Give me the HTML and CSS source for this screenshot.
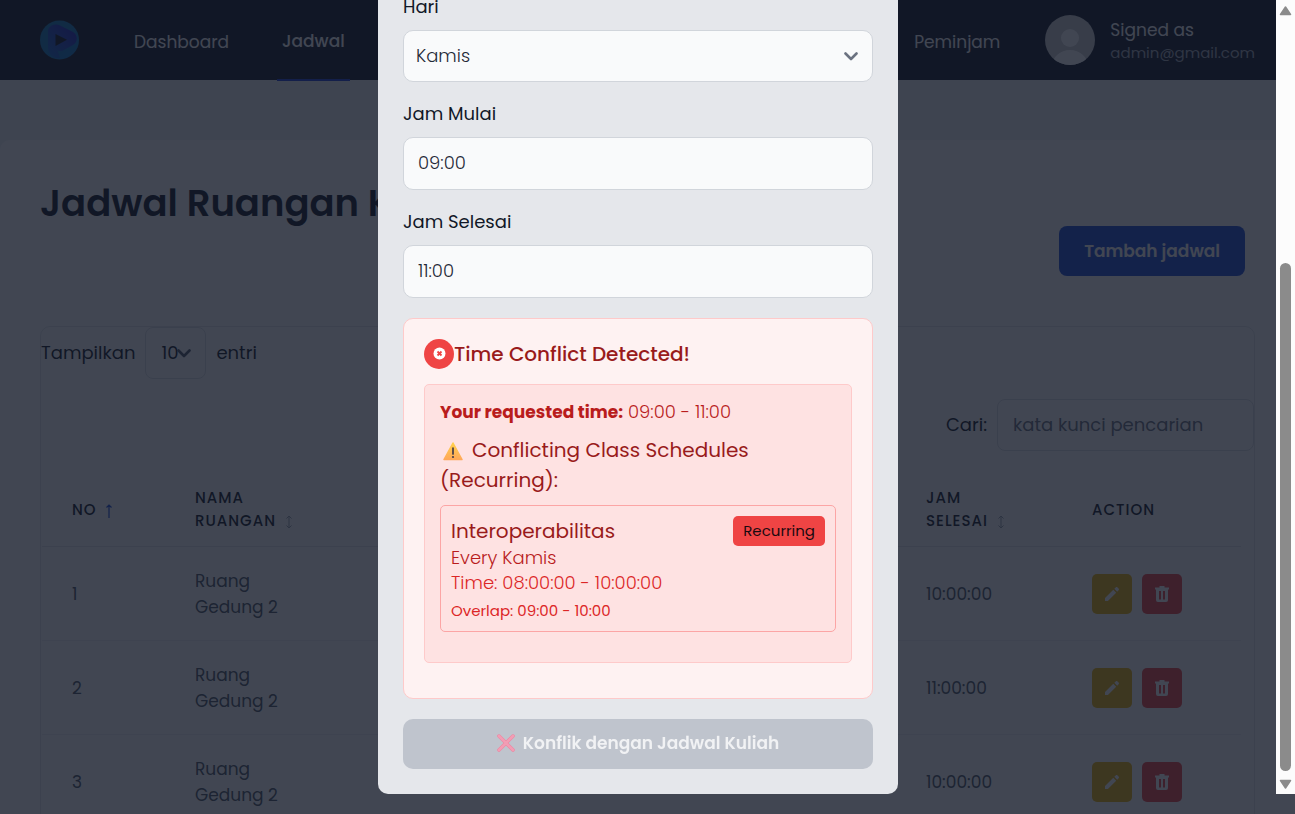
FILE: index.html
```html
<!DOCTYPE html>
<html lang="id">
<head>
<meta charset="utf-8">
<meta name="viewport" content="width=device-width, initial-scale=1">
<title>Jadwal Ruangan</title>
<link rel="stylesheet" href="styles.css">
</head>
<body>
<svg class="sprite" aria-hidden="true">
  <symbol id="i-chevron" viewBox="0 0 14 9"><path d="M1.500 1.500 7 7l5.500-5.500" fill="none" stroke="currentColor" stroke-width="2.600" stroke-linecap="round" stroke-linejoin="round"/></symbol>
  <symbol id="i-pencil" viewBox="0 0 16 16"><path d="M1 12.100 9.300 3.800l2.900 2.900L3.900 15H1zM10.300 2.800l1.400-1.400c.5-.5 1.300-.5 1.800 0l1.100 1.100c.5.500.5 1.300 0 1.800l-1.400 1.400z" fill="currentColor"/></symbol>
  <symbol id="i-trash" viewBox="0 0 14 16"><path fill-rule="evenodd" d="M4.500 0h5v1.500H14v2h-1V14a2 2 0 0 1-2 2H3a2 2 0 0 1-2-2V3.500H0v-2h4.500zM4 5v8.500h2V5zm4 0v8.500h2V5z" fill="currentColor"/></symbol>
  <symbol id="i-sort" viewBox="0 0 8 14"><path d="M4 1v12M1.500 3.500 4 1l2.500 2.500M1.500 10.500 4 13l2.500-2.500" fill="none" stroke="currentColor"/></symbol>
  <symbol id="i-up" viewBox="0 0 8 14"><path d="M4 1v13M1.500 3.500 4 1l2.500 2.500" fill="none" stroke="currentColor" stroke-width="1.200"/></symbol>
</svg>

<div class="page">
  <header class="navbar">
    <a class="brand" href="#" aria-label="Beranda">
      <svg width="40" height="40" viewBox="0 0 40 40">
        <defs>
          <linearGradient id="g1" x1="0" y1="0" x2="1" y2="1"><stop offset="0" stop-color="#127ab4"/><stop offset="1" stop-color="#0c74c4"/></linearGradient>
          <linearGradient id="g2" x1="0" y1="1" x2="1" y2="0"><stop offset="0" stop-color="#1468c8"/><stop offset=".55" stop-color="#2040c0"/><stop offset="1" stop-color="#2418c0"/></linearGradient>
        </defs>
        <circle cx="19.500" cy="20" r="19.500" fill="url(#g1)"/>
        <path d="M20 38c-7 1-12-4-12-11V12c0-6 6-9 12-6.500l13 6.500c5 3 5 10 0 13l-9 5c-5 3-8 0-8-4" fill="url(#g2)"/>
        <path d="M15.500 14 27 19.800 15.500 26z" fill="#111827"/>
      </svg>
    </a>
    <nav class="menu">
      <a class="menu-link" href="#">Dashboard</a>
      <a class="menu-link menu-link-active" href="#">Jadwal</a>
      <a class="menu-link menu-link-last" href="#">Peminjam</a>
    </nav>
    <div class="account">
      <svg width="50" height="50" viewBox="0 0 50 50" aria-hidden="true">
        <defs><clipPath id="av"><circle cx="25" cy="25" r="25"/></clipPath></defs>
        <g clip-path="url(#av)"><rect width="50" height="50" fill="#cfcfd0"/><circle cx="25" cy="23" r="9" fill="#fff"/><ellipse cx="25" cy="51" rx="18" ry="16" fill="#fff"/></g>
      </svg>
      <div class="account-text">
        <span class="account-role">Signed as</span>
        <span class="account-mail">admin@gmail.com</span>
      </div>
    </div>
  </header>

  <main class="content">
    <h1 class="title">Jadwal Ruangan Kuliah</h1>
    <div class="actions"><button class="btn-add" type="button">Tambah jadwal</button></div>

    <section class="card">
      <div class="length">
        <label for="len">Tampilkan</label>
        <span class="select-wrap length-select">
          <select id="len" class="len-control"><option>10</option></select>
          <svg class="chevron" width="14" height="9"><use href="#i-chevron"/></svg>
        </span>
        <span>entri</span>
      </div>
      <div class="search">
        <label for="cari">Cari:</label>
        <input id="cari" class="search-control" type="text" placeholder="kata kunci pencarian">
      </div>
      <table class="schedule">
        <colgroup><col class="c-no"><col class="c-room"><col><col class="c-end"><col class="c-action"></colgroup>
        <thead>
          <tr>
            <th>No <svg class="sort sort-active" width="8" height="14"><use href="#i-up"/></svg></th>
            <th>Nama<br>Ruangan <svg class="sort" width="8" height="14"><use href="#i-sort"/></svg></th>
            <td></td>
            <th>Jam<br>Selesai <svg class="sort" width="8" height="14"><use href="#i-sort"/></svg></th>
            <th>Action</th>
          </tr>
        </thead>
        <tbody>
          <tr><td>1</td><td>Ruang<br>Gedung 2</td><td></td><td>10:00:00</td>
            <td><div class="row-actions"><button class="icon-btn edit" type="button" aria-label="Edit"><svg width="16" height="16"><use href="#i-pencil"/></svg></button><button class="icon-btn delete" type="button" aria-label="Hapus"><svg width="14" height="16"><use href="#i-trash"/></svg></button></div></td></tr>
          <tr><td>2</td><td>Ruang<br>Gedung 2</td><td></td><td>11:00:00</td>
            <td><div class="row-actions"><button class="icon-btn edit" type="button" aria-label="Edit"><svg width="16" height="16"><use href="#i-pencil"/></svg></button><button class="icon-btn delete" type="button" aria-label="Hapus"><svg width="14" height="16"><use href="#i-trash"/></svg></button></div></td></tr>
          <tr><td>3</td><td>Ruang<br>Gedung 2</td><td></td><td>10:00:00</td>
            <td><div class="row-actions"><button class="icon-btn edit" type="button" aria-label="Edit"><svg width="16" height="16"><use href="#i-pencil"/></svg></button><button class="icon-btn delete" type="button" aria-label="Hapus"><svg width="14" height="16"><use href="#i-trash"/></svg></button></div></td></tr>
        </tbody>
      </table>
    </section>
  </main>
</div>

<div class="overlay">
  <div class="overlay-body">
    <form class="modal" role="dialog" aria-label="Tambah jadwal">
      <div class="field">
        <label for="hari">Hari</label>
        <span class="select-wrap">
          <select id="hari" class="control control-select"><option>Kamis</option></select>
          <svg class="chevron" width="14" height="9"><use href="#i-chevron"/></svg>
        </span>
      </div>
      <div class="field">
        <label for="mulai">Jam Mulai</label>
        <input id="mulai" class="control control-time" type="text" value="09:00">
      </div>
      <div class="field">
        <label for="selesai">Jam Selesai</label>
        <input id="selesai" class="control control-time" type="text" value="11:00">
      </div>

      <section class="alert">
        <div class="alert-head">
          <svg width="30" height="30" viewBox="0 0 30 30" aria-hidden="true"><circle cx="15" cy="15" r="15" fill="#ef4444"/><circle cx="15.500" cy="14.500" r="6" fill="#fff"/><path d="m13.500 12.500 4 4m0-4-4 4" stroke="#ef4444" stroke-width="1.800"/></svg>
          <h2 class="alert-title">Time Conflict Detected!</h2>
        </div>
        <div class="alert-body">
          <p class="requested"><strong>Your requested time:</strong> 09:00 - 11:00</p>
          <h3 class="conflict-title"><svg class="warn" width="22" height="20" viewBox="0 0 22 20" aria-hidden="true"><defs><linearGradient id="w" x1="0" y1="0" x2="0" y2="1"><stop offset="0" stop-color="#ffd04f"/><stop offset="1" stop-color="#ffa858"/></linearGradient></defs><path d="M11 2 20 18.500H2z" fill="url(#w)" stroke="url(#w)" stroke-width="1.500" stroke-linejoin="round"/><path d="M11 7v6" stroke="#433b4a" stroke-width="1.700" stroke-linecap="round"/><circle cx="11" cy="16" r="1.100" fill="#433b4a"/></svg>Conflicting Class Schedules (Recurring):</h3>
          <article class="conflict">
            <div>
              <h4 class="conflict-name">Interoperabilitas</h4>
              <p class="conflict-day">Every Kamis</p>
              <p class="conflict-time">Time: 08:00:00 - 10:00:00</p>
              <p class="conflict-overlap">Overlap: 09:00 - 10:00</p>
            </div>
            <span class="badge">Recurring</span>
          </article>
        </div>
      </section>

      <button class="submit" type="submit" disabled>
        <svg width="18" height="18" viewBox="0 0 18 18" aria-hidden="true"><path d="m2 2 14 14m0-14-14 14" stroke="#ee829f" stroke-width="3.500" stroke-linecap="round"/><path d="m2 2 14 14m0-14-14 14" stroke="#f29db4" stroke-width="2.500" stroke-linecap="round"/></svg>
        Konflik dengan Jadwal Kuliah
      </button>
    </form>
  </div>
  <div class="scrollbar" aria-hidden="true">
    <svg width="13" height="10" viewBox="0 0 13 10"><path d="M6.500 1 11.500 8.500h-10z" fill="#8b8b8b" stroke="#8b8b8b" stroke-width="1.500" stroke-linejoin="round"/></svg>
    <div class="track"><div class="thumb"></div></div>
    <svg width="13" height="10" viewBox="0 0 13 10"><path d="M6.500 9 11.500 1.500h-10z" fill="#8b8b8b" stroke="#8b8b8b" stroke-width="1.500" stroke-linejoin="round"/></svg>
  </div>
</div>
</body>
</html>
```
FILE: styles.css
```css
*, *::before, *::after { box-sizing: border-box; }

body {
  margin: 0;
  height: 100vh;
  overflow: hidden;
  background: #f1f4f6;
  color: #111827;
  font: 400 18px/24px Poppins, Inter, sans-serif;
}

h1, h2, h3, h4, p { margin: 0; font-weight: 400; }
a { color: inherit; text-decoration: none; }
svg { display: block; flex: none; }
button, input, select { font: inherit; color: inherit; margin: 0; }
button { border: 0; padding: 0; }
.sprite { position: absolute; width: 0; height: 0; }

/* Navbar */
.navbar {
  display: flex;
  align-items: center;
  height: 80px;
  padding: 0 40px;
  background: #111827;
  color: #fff;
}
.menu { display: flex; flex: 1; align-self: stretch; gap: 43px; margin-left: 49px; font-size: 17px; }
.menu-link { display: flex; align-items: center; height: 81px; padding: 2px 5px 0; }
.menu-link-active { font-weight: 500; border-bottom: 2px solid #1d3fd8; }
.menu-link-last { margin-left: auto; margin-right: 40px; }
.account { display: flex; align-items: center; gap: 15px; }
.account-text { display: flex; flex-direction: column; padding-top: 2px; }
.account-role { font-size: 17px; line-height: 24px; }
.account-mail { font-size: 15px; line-height: 22px; color: #a3a9b6; }

/* Page content */
.content {
  min-height: 100vh;
  margin-top: 60px;
  padding: 40px;
  border-radius: 10px 10px 0 0;
  background: #fff;
}
.title { font-size: 37px; line-height: 46px; font-weight: 600; }
.actions { display: flex; justify-content: flex-end; padding: 0 10px 50px; }
.btn-add {
  height: 50px;
  padding: 0 25px;
  border-radius: 8px;
  background: #1d4ed8;
  color: #fff;
  font-size: 17px;
  font-weight: 600;
}

.card { border: 1px solid #e5e7eb; border-radius: 10px; }
.length { display: flex; align-items: center; gap: 10px; }
.select-wrap { display: grid; align-items: center; }
.select-wrap > * { grid-area: 1 / 1; }
.chevron { justify-self: end; margin-right: 15px; color: #6b7280; pointer-events: none; }
.length-select .chevron { color: #4b5563; }
.len-control {
  appearance: none;
  width: 61px;
  height: 52px;
  padding: 0 15px;
  border: 1px solid #dde0e5;
  border-radius: 8px;
  background: #fff;
}
.search { display: flex; align-items: center; justify-content: flex-end; gap: 10px; margin: 20px 0; }
.search-control {
  width: 257px;
  height: 52px;
  padding: 0 15px 2px;
  border: 1px solid #dde0e5;
  border-radius: 8px;
  background: #fff;
}
.search-control::placeholder { color: #6b7280; opacity: 1; }

.schedule { width: calc(100% - 14px); margin-left: 1px; table-layout: fixed; border-collapse: collapse; line-height: 26px; }
.schedule th, .schedule td { padding: 20px 30px; text-align: left; border-bottom: 1px solid #f0f1f3; white-space: nowrap; }
.schedule tbody td { height: 94px; color: #4b5563; font-size: 17px; }
.schedule thead { background: #fcfcfd; }
.schedule thead th, .schedule thead td { padding: 15px 30px 14px; font-size: 15px; line-height: 23px; font-weight: 500; letter-spacing: 1px; text-transform: uppercase; border-color: #e5e7eb; }
.c-no { width: 123px; }
.c-room { width: 190px; }
.c-end { width: 166px; }
.c-action { width: 179px; }
.sort { display: inline-block; vertical-align: -3px; margin-left: 4px; color: #9ca3af; }
.sort-active { color: #1d4ed8; }
.row-actions { display: flex; gap: 10px; }
.icon-btn { display: flex; align-items: center; justify-content: center; width: 40px; height: 40px; border-radius: 5px; color: #fff; }
.edit { background: #eab308; }
.delete { background: #ef4444; }

/* Modal overlay */
.overlay { position: fixed; inset: 0; display: flex; overflow: hidden; background: rgba(17, 24, 39, .8); }
.overlay-body { flex: 1; display: flex; justify-content: center; align-items: flex-end; padding-bottom: 20px; }
.modal {
  display: flex;
  flex-direction: column;
  gap: 20px;
  width: 100%;
  max-width: 520px;
  padding: 25px;
  border-radius: 10px;
  background: #e5e7eb;
}
.field { display: flex; flex-direction: column; gap: 11px; }
.control {
  width: 100%;
  height: 53px;
  padding: 0 14px 2px;
  border: 1px solid #d1d5db;
  border-radius: 10px;
  background: #f9fafb;
  color: #1f2937;
  font-weight: 300;
}
.control-select { appearance: none; height: 52px; padding: 0 12px; }

.alert { padding: 20px 20px 35px; border: 1px solid #fecaca; border-radius: 10px; background: #fef2f2; }
.alert-head { display: flex; align-items: center; margin-bottom: 15px; }
.alert-title { font-size: 20px; line-height: 30px; font-weight: 500; color: #991b1b; }
.alert-body { padding: 15px 15px 30px; border: 1px solid #fecaca; border-radius: 5px; background: #fee2e2; color: #b91c1c; }
.requested { font-weight: 300; }
.requested strong { font-size: 17px; font-weight: 700; }
.conflict-title { margin: 11px 0 10px; font-size: 20px; line-height: 30px; color: #991b1b; }
.warn { display: inline-block; vertical-align: -4px; margin: 0 8px 0 2px; }
.conflict { display: flex; justify-content: space-between; align-items: flex-start; padding: 10px; border: 1px solid #fca5a5; border-radius: 5px; }
.conflict-name { font-size: 20px; line-height: 30px; color: #991b1b; }
.conflict-day, .conflict-time { font-weight: 300; }
.conflict-time { margin-top: 1px; color: #dc2626; }
.conflict-overlap { margin-top: 6px; font-size: 15px; line-height: 20px; color: #dc2626; }
.badge { padding: 0 10px; border-radius: 5px; background: #ef4444; color: #1a0a10; font-size: 15px; line-height: 30px; }

.submit {
  display: flex;
  align-items: center;
  justify-content: center;
  gap: 8px;
  height: 50px;
  padding-bottom: 2px;
  border-radius: 10px;
  background: #bfc4cd;
  color: #f1f2f4;
  font-size: 17px;
  font-weight: 600;
}

.scrollbar {
  display: flex;
  flex-direction: column;
  align-items: center;
  width: 19px;
  margin-bottom: 20px;
  padding: 6px 0 5px;
  background: #fcfcfc;
}
.track { flex: 1; display: flex; align-items: flex-end; padding: 8px 0; }
.thumb { width: 11px; height: 68%; border-radius: 6px; background: #8b8b8b; }
```
